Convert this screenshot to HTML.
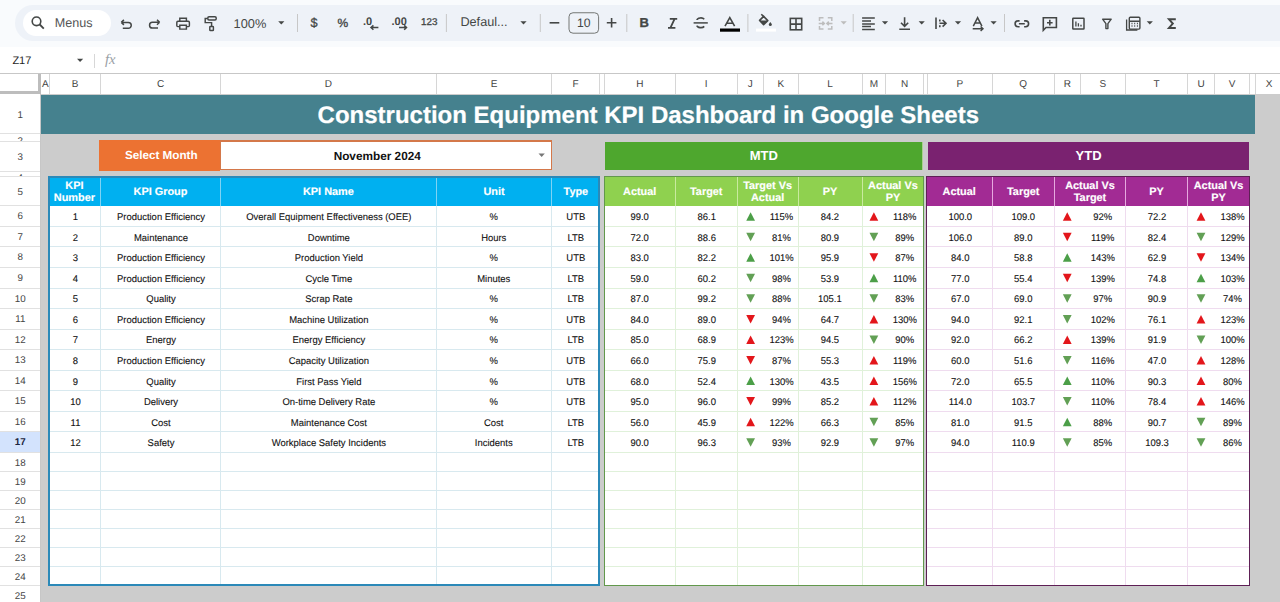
<!DOCTYPE html><html><head><meta charset="utf-8"><style>
html,body{margin:0;padding:0}
body{width:1280px;height:602px;overflow:hidden;position:relative;background:#f9fbfd;font-family:"Liberation Sans",sans-serif;text-rendering:geometricPrecision}
.t{position:absolute;text-align:center;white-space:nowrap;overflow:hidden}
.d{font-size:9.5px;color:#222}
.h{font-size:10.9px;color:#fff;font-weight:bold;-webkit-text-stroke:0.15px #fff}
svg{position:absolute;overflow:visible}
</style></head><body>
<div style="position:absolute;left:15.00px;top:5.00px;width:1305.00px;height:36.00px;background:#eef2f8;border-radius:18px"></div>
<div style="position:absolute;left:22.50px;top:10.00px;width:88.50px;height:26.00px;background:#fff;border-radius:13px"></div>
<svg style="left:0;top:0" width="1280" height="48" viewBox="0 0 1280 48" fill="none" stroke="#444746" stroke-width="1.6" stroke-linecap="butt"><circle cx="36.5" cy="21.3" r="4.3"/><path d="M39.7 24.5 L43.8 28.6" stroke-width="1.8"/><path d="M121.3 22.4 L123.9 19.9 M121.3 22.4 L123.9 24.9 M121.3 22.4 H128.3 a2.95 2.95 0 0 1 0 5.9 H122.8" stroke-width="1.5"/><path d="M159.6 22.3 L157 19.8 M159.6 22.3 L157 24.8 M159.6 22.3 H152.4 a2.85 2.85 0 0 0 0 5.7 H158" stroke-width="1.5"/><path d="M179.8 21.3 V18.3 H186.4 V21.3 M179.6 26.6 H177.8 a1 1 0 0 1 -1 -1 V22.4 a1.2 1.2 0 0 1 1.2 -1.2 H188.2 a1.2 1.2 0 0 1 1.2 1.2 V25.6 a1 1 0 0 1 -1 1 H186.6 M179.8 25.3 H186.4 V29.1 H179.8 Z" stroke-width="1.45"/><rect x="207.8" y="16.7" width="8.4" height="3.3" rx="1.2" stroke-width="1.45"/><path d="M207.6 18.4 H205.2 V22.6 H211.6 V26.4" stroke-width="1.45"/><rect x="209.8" y="26.4" width="3.6" height="4.2" rx="0.7" stroke-width="1.45"/><path d="M297.5 14 V32" stroke="#c7c7c7" stroke-width="1"/><path d="M446.4 14 V32" stroke="#c7c7c7" stroke-width="1"/><path d="M540.3 14 V32" stroke="#c7c7c7" stroke-width="1"/><path d="M626.8 14 V32" stroke="#c7c7c7" stroke-width="1"/><path d="M747.9 14 V32" stroke="#c7c7c7" stroke-width="1"/><path d="M853.2 14 V32" stroke="#c7c7c7" stroke-width="1"/><path d="M1004.5 14 V32" stroke="#c7c7c7" stroke-width="1"/><path d="M549.6 22.8 H559.3"/><path d="M606.8 22.8 H616.4 M611.6 18 V27.6"/><rect x="569" y="12.75" width="29.6" height="20.45" rx="4" stroke="#747775" stroke-width="1"/><path d="M669.8 18.8 H677.2 M668 27.8 H675.4 M674.6 18.8 L670.4 27.8" stroke-width="1.8"/><path d="M693.6 22.9 H707.8" stroke-width="1.5"/><path d="M704.2 19.2 a3.8 2.2 0 0 0 -7.2 0.8 M697 25.6 a3.8 2.2 0 0 0 7.2 0.8" stroke-width="1.7"/><path d="M725 26.2 L729.8 17.6 L734.6 26.2 M726.7 23.3 H732.9" stroke-width="1.6"/><rect x="720" y="28.5" width="20" height="3.2" fill="#000" stroke="none"/><path d="M761.3 14.2 L764 16.9" stroke-width="1.6"/><path d="M759.6 20.4 L763.6 16.4 L767.8 20.6 L763.6 24.6 Z" stroke-width="1.6" stroke-linejoin="round"/><path d="M759.6 20.5 H767.7 L763.6 24.6 Z" fill="#444746" stroke="none"/><path d="M770.3 22 q-1.5 1.8 -1.5 2.6 a1.5 1.5 0 0 0 3 0 q0 -0.8 -1.5 -2.6z" fill="#444746" stroke="none"/><rect x="756" y="28.6" width="20" height="3" fill="#fff" stroke="none"/><rect x="790.3" y="18.4" width="11.4" height="11.4" stroke-width="1.6"/><path d="M796 18.4 V29.8 M790.3 24.1 H801.7" stroke-width="1.6"/><path d="M819.5 21 V17.8 H823.5 M819.5 26 V29 H823.5 M831.8 21 V17.8 H827.8 M831.8 26 V29 H827.8 M818.7 23.4 H824.3 M822.4 21.6 L824.3 23.4 L822.4 25.2 M832.5 23.4 H826.9 M828.8 21.6 L826.9 23.4 L828.8 25.2" stroke="#bdbdbd" stroke-width="1.5"/><path d="M862.1 17.9 H874.8 M862.1 20.9 H871 M862.1 23.9 H874.8 M862.1 26.6 H871 M862.1 29.4 H874.8" stroke-width="1.5"/><path d="M904.6 17.2 V26.2 M901 22.8 L904.6 26.4 L908.2 22.8 M899.3 29.2 H910" stroke-width="1.6"/><path d="M936 17.6 V29 M939.5 23.3 H946 M942.6 20 L946 23.3 L942.6 26.6 M939.8 19.5 V21.5 M939.8 25.2 V27.2" stroke-width="1.6"/><path d="M973.3 26.2 L977.6 17.6 L981.9 26.2 M975 23 H980.2" stroke-width="1.5"/><path d="M972.7 28.8 H983 M980.6 26.6 L983 28.8 L980.6 31" stroke-width="1.4"/><path d="M1019.6 20.9 H1018 a2.9 2.9 0 0 0 0 5.8 H1019.6 M1024.1 20.9 H1025.7 a2.9 2.9 0 0 1 0 5.8 H1024.1 M1018.9 23.8 H1024.8" stroke-width="1.6"/><path d="M1043.3 17.8 H1056.4 V27.5 H1046 L1043.3 30.2 Z M1049.8 19.8 V25.5 M1047 22.7 H1052.6" stroke-width="1.6"/><rect x="1072.8" y="18.2" width="11.2" height="10.8" rx="0.5" stroke-width="1.5"/><path d="M1075.9 21.5 V26.6 M1078.4 23.2 V26.6 M1081 24.8 V26.6" stroke-width="1.3"/><path d="M1102.6 19.2 H1111.2 L1107.9 23.6 V28.6 H1105.9 V23.6 Z" stroke-width="1.4" stroke-linejoin="round"/><path d="M1126.6 19.5 V30 H1137.4" stroke-width="1.3"/><rect x="1129.3" y="17.2" width="10.6" height="11.9" rx="1" stroke-width="1.4"/><path d="M1129.3 21.2 H1139.9 M1131.5 23.5 h1 M1134.2 23.5 h1 M1136.9 23.5 h1 M1131.5 26 h1 M1134.2 26 h1 M1136.9 26 h1" stroke-width="1.5"/><path d="M1175.8 19.3 H1169 L1172.8 23.6 L1169 27.9 H1175.8" stroke-width="2"/><path d="M278.2 21.2 H284.4 L281.3 24.4 Z" fill="#444746" stroke="none"/><path d="M520.4 21.2 H526.6 L523.5 24.4 Z" fill="#444746" stroke="none"/><path d="M881.9 21.2 H888.1 L885.0 24.4 Z" fill="#444746" stroke="none"/><path d="M918.6 21.2 H924.8000000000001 L921.7 24.4 Z" fill="#444746" stroke="none"/><path d="M954.9 21.2 H961.1 L958.0 24.4 Z" fill="#444746" stroke="none"/><path d="M990.5 21.2 H996.7 L993.6 24.4 Z" fill="#444746" stroke="none"/><path d="M1146.7 21.2 H1152.9 L1149.8 24.4 Z" fill="#444746" stroke="none"/><path d="M840.6 21.2 H846.8 L843.7 24.4 Z" fill="#bdbdbd" stroke="none"/></svg>
<div style="position:absolute;left:54.8px;top:15.9px;white-space:nowrap;font-size:12.6px;color:#555">Menus</div>
<div style="position:absolute;left:233.6px;top:15.5px;white-space:nowrap;font-size:12.8px;color:#444746">100%</div>
<div style="position:absolute;left:310.6px;top:15.2px;white-space:nowrap;font-size:12.8px;color:#444746;-webkit-text-stroke:0.25px #444746">$</div>
<div style="position:absolute;left:337.4px;top:15.6px;white-space:nowrap;font-size:12px;color:#444746;-webkit-text-stroke:0.35px #444746">%</div>
<div style="position:absolute;left:363px;top:15.6px;white-space:nowrap;font-size:11px;color:#444746;font-weight:bold">.0</div>
<div style="position:absolute;left:391.5px;top:15.6px;white-space:nowrap;font-size:11px;color:#444746;font-weight:bold">.00</div>
<div style="position:absolute;left:421px;top:17.4px;white-space:nowrap;font-size:9.8px;color:#444746;-webkit-text-stroke:0.3px #444746">123</div>
<div style="position:absolute;left:460.4px;top:15.2px;white-space:nowrap;font-size:12.7px;color:#444746">Defaul...</div>
<div style="position:absolute;left:577px;top:15.8px;white-space:nowrap;font-size:12.2px;color:#444746">10</div>
<div style="position:absolute;left:639.6px;top:15.1px;white-space:nowrap;font-size:13px;color:#444746;font-weight:bold;-webkit-text-stroke:0.35px #444746">B</div>
<svg style="left:0;top:0" width="1280" height="48" fill="none" stroke="#444746" stroke-width="1.5"><path d="M371 27.6 H378.4 M373.4 25.4 L371 27.6 L373.4 29.8"/><path d="M399 27.6 H406.5 M404.2 25.4 L406.5 27.6 L404.2 29.8"/></svg>
<div style="position:absolute;left:0.00px;top:47.20px;width:1280.00px;height:25.80px;background:#fff"></div>
<div style="position:absolute;left:0.00px;top:73.00px;width:1280.00px;height:1.00px;background:#c7c7c7"></div>
<div style="position:absolute;left:12.4px;top:54.5px;white-space:nowrap;font-size:11px;color:#1f1f1f">Z17</div>
<svg style="left:0;top:0" width="200" height="80"><path d="M77 58.8 H83.2 L80.1 62 Z" fill="#444746"/><path d="M94.5 54 V68" stroke="#d7d7d7" stroke-width="1"/></svg>
<div style="position:absolute;left:105px;top:52px;white-space:nowrap;font-size:14.5px;color:#9aa0a6;font-family:'Liberation Serif',serif"><i>fx</i></div>
<div style="position:absolute;left:0.00px;top:74.00px;width:1280.00px;height:20.00px;background:#fff"></div>
<div class="t" style="left:41.00px;top:75.20px;width:8.50px;height:18.80px;line-height:18.80px;font-size:10px;color:#444;line-height:20px">A</div>
<div style="position:absolute;left:49.00px;top:74.00px;width:1.00px;height:20.00px;background:#d6d6d6"></div>
<div class="t" style="left:49.50px;top:75.20px;width:51.00px;height:18.80px;line-height:18.80px;font-size:10px;color:#444;line-height:20px">B</div>
<div style="position:absolute;left:100.00px;top:74.00px;width:1.00px;height:20.00px;background:#d6d6d6"></div>
<div class="t" style="left:100.50px;top:75.20px;width:120.00px;height:18.80px;line-height:18.80px;font-size:10px;color:#444;line-height:20px">C</div>
<div style="position:absolute;left:220.00px;top:74.00px;width:1.00px;height:20.00px;background:#d6d6d6"></div>
<div class="t" style="left:220.50px;top:75.20px;width:215.75px;height:18.80px;line-height:18.80px;font-size:10px;color:#444;line-height:20px">D</div>
<div style="position:absolute;left:435.75px;top:74.00px;width:1.00px;height:20.00px;background:#d6d6d6"></div>
<div class="t" style="left:436.25px;top:75.20px;width:115.50px;height:18.80px;line-height:18.80px;font-size:10px;color:#444;line-height:20px">E</div>
<div style="position:absolute;left:551.25px;top:74.00px;width:1.00px;height:20.00px;background:#d6d6d6"></div>
<div class="t" style="left:551.75px;top:75.20px;width:47.50px;height:18.80px;line-height:18.80px;font-size:10px;color:#444;line-height:20px">F</div>
<div style="position:absolute;left:598.75px;top:74.00px;width:1.00px;height:20.00px;background:#d6d6d6"></div>
<div style="position:absolute;left:603.75px;top:74.00px;width:1.00px;height:20.00px;background:#d6d6d6"></div>
<div class="t" style="left:604.25px;top:75.20px;width:71.25px;height:18.80px;line-height:18.80px;font-size:10px;color:#444;line-height:20px">H</div>
<div style="position:absolute;left:675.00px;top:74.00px;width:1.00px;height:20.00px;background:#d6d6d6"></div>
<div class="t" style="left:675.50px;top:75.20px;width:61.50px;height:18.80px;line-height:18.80px;font-size:10px;color:#444;line-height:20px">I</div>
<div style="position:absolute;left:736.50px;top:74.00px;width:1.00px;height:20.00px;background:#d6d6d6"></div>
<div class="t" style="left:737.00px;top:75.20px;width:26.25px;height:18.80px;line-height:18.80px;font-size:10px;color:#444;line-height:20px">J</div>
<div style="position:absolute;left:762.75px;top:74.00px;width:1.00px;height:20.00px;background:#d6d6d6"></div>
<div class="t" style="left:763.25px;top:75.20px;width:35.00px;height:18.80px;line-height:18.80px;font-size:10px;color:#444;line-height:20px">K</div>
<div style="position:absolute;left:797.75px;top:74.00px;width:1.00px;height:20.00px;background:#d6d6d6"></div>
<div class="t" style="left:798.25px;top:75.20px;width:63.75px;height:18.80px;line-height:18.80px;font-size:10px;color:#444;line-height:20px">L</div>
<div style="position:absolute;left:861.50px;top:74.00px;width:1.00px;height:20.00px;background:#d6d6d6"></div>
<div class="t" style="left:862.00px;top:75.20px;width:23.75px;height:18.80px;line-height:18.80px;font-size:10px;color:#444;line-height:20px">M</div>
<div style="position:absolute;left:885.25px;top:74.00px;width:1.00px;height:20.00px;background:#d6d6d6"></div>
<div class="t" style="left:885.75px;top:75.20px;width:37.50px;height:18.80px;line-height:18.80px;font-size:10px;color:#444;line-height:20px">N</div>
<div style="position:absolute;left:922.75px;top:74.00px;width:1.00px;height:20.00px;background:#d6d6d6"></div>
<div style="position:absolute;left:927.00px;top:74.00px;width:1.00px;height:20.00px;background:#d6d6d6"></div>
<div class="t" style="left:927.50px;top:75.20px;width:64.50px;height:18.80px;line-height:18.80px;font-size:10px;color:#444;line-height:20px">P</div>
<div style="position:absolute;left:991.50px;top:74.00px;width:1.00px;height:20.00px;background:#d6d6d6"></div>
<div class="t" style="left:992.00px;top:75.20px;width:62.50px;height:18.80px;line-height:18.80px;font-size:10px;color:#444;line-height:20px">Q</div>
<div style="position:absolute;left:1054.00px;top:74.00px;width:1.00px;height:20.00px;background:#d6d6d6"></div>
<div class="t" style="left:1054.50px;top:75.20px;width:25.50px;height:18.80px;line-height:18.80px;font-size:10px;color:#444;line-height:20px">R</div>
<div style="position:absolute;left:1079.50px;top:74.00px;width:1.00px;height:20.00px;background:#d6d6d6"></div>
<div class="t" style="left:1080.00px;top:75.20px;width:45.50px;height:18.80px;line-height:18.80px;font-size:10px;color:#444;line-height:20px">S</div>
<div style="position:absolute;left:1125.00px;top:74.00px;width:1.00px;height:20.00px;background:#d6d6d6"></div>
<div class="t" style="left:1125.50px;top:75.20px;width:62.00px;height:18.80px;line-height:18.80px;font-size:10px;color:#444;line-height:20px">T</div>
<div style="position:absolute;left:1187.00px;top:74.00px;width:1.00px;height:20.00px;background:#d6d6d6"></div>
<div class="t" style="left:1187.50px;top:75.20px;width:27.00px;height:18.80px;line-height:18.80px;font-size:10px;color:#444;line-height:20px">U</div>
<div style="position:absolute;left:1214.00px;top:74.00px;width:1.00px;height:20.00px;background:#d6d6d6"></div>
<div class="t" style="left:1214.50px;top:75.20px;width:35.00px;height:18.80px;line-height:18.80px;font-size:10px;color:#444;line-height:20px">V</div>
<div style="position:absolute;left:1249.00px;top:74.00px;width:1.00px;height:20.00px;background:#d6d6d6"></div>
<div style="position:absolute;left:1254.50px;top:74.00px;width:1.00px;height:20.00px;background:#d6d6d6"></div>
<div class="t" style="left:1255.00px;top:75.20px;width:28.00px;height:18.80px;line-height:18.80px;font-size:10px;color:#444;line-height:20px">X</div>
<div style="position:absolute;left:1282.50px;top:74.00px;width:1.00px;height:20.00px;background:#d6d6d6"></div>
<div style="position:absolute;left:1399.50px;top:74.00px;width:1.00px;height:20.00px;background:#d6d6d6"></div>
<div style="position:absolute;left:0.00px;top:74.00px;width:40.60px;height:20.00px;background:#fff"></div>
<div style="position:absolute;left:37.50px;top:74.00px;width:3.10px;height:20.00px;background:#bdbdbd"></div>
<div style="position:absolute;left:0.00px;top:91.00px;width:40.60px;height:3.00px;background:#bdbdbd"></div>
<div style="position:absolute;left:0.00px;top:94.00px;width:40.60px;height:508.00px;background:#fff"></div>
<div class="t" style="left:0.00px;top:95.50px;width:40.60px;height:39.50px;line-height:39.50px;font-size:9.8px;color:#444;">1</div>
<div style="position:absolute;left:0.00px;top:133.00px;width:40.60px;height:1.00px;background:#e1e1e1"></div>
<div class="t" style="left:0.00px;top:133.50px;width:40.60px;height:7.50px;line-height:7.50px;font-size:9.8px;color:#444;line-height:16px;height:7.5px">2</div>
<div style="position:absolute;left:0.00px;top:140.50px;width:40.60px;height:1.00px;background:#e1e1e1"></div>
<div class="t" style="left:0.00px;top:142.50px;width:40.60px;height:30.00px;line-height:30.00px;font-size:9.8px;color:#444;">3</div>
<div style="position:absolute;left:0.00px;top:170.50px;width:40.60px;height:1.00px;background:#e1e1e1"></div>
<div class="t" style="left:0.00px;top:171.00px;width:40.60px;height:5.00px;line-height:5.00px;font-size:9.8px;color:#444;line-height:16px;height:5px">4</div>
<div style="position:absolute;left:0.00px;top:175.50px;width:40.60px;height:1.00px;background:#e1e1e1"></div>
<div class="t" style="left:0.00px;top:177.50px;width:40.60px;height:29.80px;line-height:29.80px;font-size:9.8px;color:#444;">5</div>
<div style="position:absolute;left:0.00px;top:205.30px;width:40.60px;height:1.00px;background:#e1e1e1"></div>
<div class="t" style="left:0.00px;top:207.30px;width:40.60px;height:20.55px;line-height:20.55px;font-size:9.8px;color:#444;">6</div>
<div style="position:absolute;left:0.00px;top:225.85px;width:40.60px;height:1.00px;background:#e1e1e1"></div>
<div class="t" style="left:0.00px;top:227.85px;width:40.60px;height:20.55px;line-height:20.55px;font-size:9.8px;color:#444;">7</div>
<div style="position:absolute;left:0.00px;top:246.40px;width:40.60px;height:1.00px;background:#e1e1e1"></div>
<div class="t" style="left:0.00px;top:248.40px;width:40.60px;height:20.55px;line-height:20.55px;font-size:9.8px;color:#444;">8</div>
<div style="position:absolute;left:0.00px;top:266.95px;width:40.60px;height:1.00px;background:#e1e1e1"></div>
<div class="t" style="left:0.00px;top:268.95px;width:40.60px;height:20.55px;line-height:20.55px;font-size:9.8px;color:#444;">9</div>
<div style="position:absolute;left:0.00px;top:287.50px;width:40.60px;height:1.00px;background:#e1e1e1"></div>
<div class="t" style="left:0.00px;top:289.50px;width:40.60px;height:20.55px;line-height:20.55px;font-size:9.8px;color:#444;">10</div>
<div style="position:absolute;left:0.00px;top:308.05px;width:40.60px;height:1.00px;background:#e1e1e1"></div>
<div class="t" style="left:0.00px;top:310.05px;width:40.60px;height:20.55px;line-height:20.55px;font-size:9.8px;color:#444;">11</div>
<div style="position:absolute;left:0.00px;top:328.60px;width:40.60px;height:1.00px;background:#e1e1e1"></div>
<div class="t" style="left:0.00px;top:330.60px;width:40.60px;height:20.55px;line-height:20.55px;font-size:9.8px;color:#444;">12</div>
<div style="position:absolute;left:0.00px;top:349.15px;width:40.60px;height:1.00px;background:#e1e1e1"></div>
<div class="t" style="left:0.00px;top:351.15px;width:40.60px;height:20.55px;line-height:20.55px;font-size:9.8px;color:#444;">13</div>
<div style="position:absolute;left:0.00px;top:369.70px;width:40.60px;height:1.00px;background:#e1e1e1"></div>
<div class="t" style="left:0.00px;top:371.70px;width:40.60px;height:20.55px;line-height:20.55px;font-size:9.8px;color:#444;">14</div>
<div style="position:absolute;left:0.00px;top:390.25px;width:40.60px;height:1.00px;background:#e1e1e1"></div>
<div class="t" style="left:0.00px;top:392.25px;width:40.60px;height:20.55px;line-height:20.55px;font-size:9.8px;color:#444;">15</div>
<div style="position:absolute;left:0.00px;top:410.80px;width:40.60px;height:1.00px;background:#e1e1e1"></div>
<div class="t" style="left:0.00px;top:412.80px;width:40.60px;height:20.55px;line-height:20.55px;font-size:9.8px;color:#444;">16</div>
<div style="position:absolute;left:0.00px;top:431.35px;width:40.60px;height:1.00px;background:#e1e1e1"></div>
<div style="position:absolute;left:0.00px;top:431.85px;width:40.60px;height:20.55px;background:#d3e3fd"></div>
<div class="t" style="left:0.00px;top:433.35px;width:40.60px;height:20.55px;line-height:20.55px;font-size:9.8px;color:#1b2540;font-weight:bold;">17</div>
<div style="position:absolute;left:0.00px;top:451.90px;width:40.60px;height:1.00px;background:#e1e1e1"></div>
<div class="t" style="left:0.00px;top:453.90px;width:40.60px;height:19.03px;line-height:19.03px;font-size:9.8px;color:#444;">18</div>
<div style="position:absolute;left:0.00px;top:470.93px;width:40.60px;height:1.00px;background:#e1e1e1"></div>
<div class="t" style="left:0.00px;top:472.93px;width:40.60px;height:19.03px;line-height:19.03px;font-size:9.8px;color:#444;">19</div>
<div style="position:absolute;left:0.00px;top:489.96px;width:40.60px;height:1.00px;background:#e1e1e1"></div>
<div class="t" style="left:0.00px;top:491.96px;width:40.60px;height:19.03px;line-height:19.03px;font-size:9.8px;color:#444;">20</div>
<div style="position:absolute;left:0.00px;top:508.99px;width:40.60px;height:1.00px;background:#e1e1e1"></div>
<div class="t" style="left:0.00px;top:510.99px;width:40.60px;height:19.03px;line-height:19.03px;font-size:9.8px;color:#444;">21</div>
<div style="position:absolute;left:0.00px;top:528.02px;width:40.60px;height:1.00px;background:#e1e1e1"></div>
<div class="t" style="left:0.00px;top:530.02px;width:40.60px;height:19.03px;line-height:19.03px;font-size:9.8px;color:#444;">22</div>
<div style="position:absolute;left:0.00px;top:547.05px;width:40.60px;height:1.00px;background:#e1e1e1"></div>
<div class="t" style="left:0.00px;top:549.05px;width:40.60px;height:19.03px;line-height:19.03px;font-size:9.8px;color:#444;">23</div>
<div style="position:absolute;left:0.00px;top:566.08px;width:40.60px;height:1.00px;background:#e1e1e1"></div>
<div class="t" style="left:0.00px;top:568.08px;width:40.60px;height:19.03px;line-height:19.03px;font-size:9.8px;color:#444;">24</div>
<div style="position:absolute;left:0.00px;top:585.11px;width:40.60px;height:1.00px;background:#e1e1e1"></div>
<div class="t" style="left:0.00px;top:587.11px;width:40.60px;height:19.03px;line-height:19.03px;font-size:9.8px;color:#444;">25</div>
<div style="position:absolute;left:0.00px;top:604.14px;width:40.60px;height:1.00px;background:#e1e1e1"></div>
<div style="position:absolute;left:40.10px;top:94.00px;width:0.90px;height:508.00px;background:#c7c7c7"></div>
<div style="position:absolute;left:41.00px;top:94.00px;width:1239.00px;height:508.00px;background:#cccccc"></div>
<div style="position:absolute;left:41.00px;top:94.80px;width:1214.00px;height:38.80px;background:#45818e"></div>
<div class="t" style="left:41.30px;top:96.20px;width:1214.00px;height:38.80px;line-height:38.80px;font-size:24px;font-weight:bold;color:#fff;line-height:40px;-webkit-text-stroke:0.2px #fff">Construction Equipment KPI Dashboard in Google Sheets</div>
<div style="position:absolute;left:99.00px;top:140.20px;width:121.30px;height:30.80px;background:#ec7232"></div>
<div class="t" style="left:100.60px;top:140.20px;width:121.30px;height:30.80px;line-height:30.80px;font-size:11.7px;font-weight:bold;color:#fff;line-height:31px">Select Month</div>
<div style="position:absolute;left:220.30px;top:140.00px;width:331.70px;height:30.40px;background:#fff;border:1.7px solid #d4784a;border-top-width:2px;box-sizing:border-box"></div>
<div class="t" style="left:219.50px;top:140.60px;width:315.50px;height:30.00px;line-height:30.00px;font-size:11.8px;font-weight:bold;color:#111;line-height:30px">November 2024</div>
<svg style="left:0;top:0" width="600" height="200"><path d="M538.5 153.6 H544.8 L541.65 157 Z" fill="#777"/></svg>
<div style="position:absolute;left:604.60px;top:141.60px;width:318.40px;height:28.10px;background:#4ea72e;border-right:1px solid #a9d18e;box-sizing:border-box"></div>
<div class="t" style="left:604.60px;top:141.60px;width:318.40px;height:28.10px;line-height:28.10px;font-size:13px;font-weight:bold;color:#fff;line-height:28px">MTD</div>
<div style="position:absolute;left:927.90px;top:141.60px;width:321.30px;height:28.10px;background:#7a2270"></div>
<div class="t" style="left:927.90px;top:141.60px;width:321.30px;height:28.10px;line-height:28.10px;font-size:13px;font-weight:bold;color:#fff;line-height:28px">YTD</div>
<div style="position:absolute;left:48.30px;top:176.00px;width:551.70px;height:409.60px;background:#fff"></div>
<div style="position:absolute;left:48.30px;top:176.00px;width:551.70px;height:29.80px;background:#00b0f0"></div>
<div style="position:absolute;left:48.30px;top:225.85px;width:551.70px;height:1.00px;background:#d8e9ef"></div>
<div style="position:absolute;left:48.30px;top:246.40px;width:551.70px;height:1.00px;background:#d8e9ef"></div>
<div style="position:absolute;left:48.30px;top:266.95px;width:551.70px;height:1.00px;background:#d8e9ef"></div>
<div style="position:absolute;left:48.30px;top:287.50px;width:551.70px;height:1.00px;background:#d8e9ef"></div>
<div style="position:absolute;left:48.30px;top:308.05px;width:551.70px;height:1.00px;background:#d8e9ef"></div>
<div style="position:absolute;left:48.30px;top:328.60px;width:551.70px;height:1.00px;background:#d8e9ef"></div>
<div style="position:absolute;left:48.30px;top:349.15px;width:551.70px;height:1.00px;background:#d8e9ef"></div>
<div style="position:absolute;left:48.30px;top:369.70px;width:551.70px;height:1.00px;background:#d8e9ef"></div>
<div style="position:absolute;left:48.30px;top:390.25px;width:551.70px;height:1.00px;background:#d8e9ef"></div>
<div style="position:absolute;left:48.30px;top:410.80px;width:551.70px;height:1.00px;background:#d8e9ef"></div>
<div style="position:absolute;left:48.30px;top:431.35px;width:551.70px;height:1.00px;background:#d8e9ef"></div>
<div style="position:absolute;left:48.30px;top:451.90px;width:551.70px;height:1.00px;background:#d8e9ef"></div>
<div style="position:absolute;left:48.30px;top:470.93px;width:551.70px;height:1.00px;background:#d8e9ef"></div>
<div style="position:absolute;left:48.30px;top:489.96px;width:551.70px;height:1.00px;background:#d8e9ef"></div>
<div style="position:absolute;left:48.30px;top:508.99px;width:551.70px;height:1.00px;background:#d8e9ef"></div>
<div style="position:absolute;left:48.30px;top:528.02px;width:551.70px;height:1.00px;background:#d8e9ef"></div>
<div style="position:absolute;left:48.30px;top:547.05px;width:551.70px;height:1.00px;background:#d8e9ef"></div>
<div style="position:absolute;left:48.30px;top:566.08px;width:551.70px;height:1.00px;background:#d8e9ef"></div>
<div style="position:absolute;left:48.30px;top:585.11px;width:551.70px;height:1.00px;background:#d8e9ef"></div>
<div style="position:absolute;left:100.00px;top:205.80px;width:1.00px;height:379.80px;background:#d8e9ef"></div>
<div style="position:absolute;left:100.00px;top:176.00px;width:1.00px;height:29.80px;background:#7fd3f4"></div>
<div style="position:absolute;left:220.00px;top:205.80px;width:1.00px;height:379.80px;background:#d8e9ef"></div>
<div style="position:absolute;left:220.00px;top:176.00px;width:1.00px;height:29.80px;background:#7fd3f4"></div>
<div style="position:absolute;left:435.75px;top:205.80px;width:1.00px;height:379.80px;background:#d8e9ef"></div>
<div style="position:absolute;left:435.75px;top:176.00px;width:1.00px;height:29.80px;background:#7fd3f4"></div>
<div style="position:absolute;left:551.25px;top:205.80px;width:1.00px;height:379.80px;background:#d8e9ef"></div>
<div style="position:absolute;left:551.25px;top:176.00px;width:1.00px;height:29.80px;background:#7fd3f4"></div>
<div class="t h" style="left:48.30px;top:176px;width:52.20px;height:29.80px;line-height:11.9px;padding-top:4.9px;box-sizing:border-box">KPI<br>Number</div>
<div class="t" style="left:100.50px;top:178.00px;width:120.00px;height:29.80px;line-height:29.80px;font-size:10.9px;color:#fff;font-weight:bold;-webkit-text-stroke:0.15px #fff">KPI Group</div>
<div class="t" style="left:220.50px;top:178.00px;width:215.75px;height:29.80px;line-height:29.80px;font-size:10.9px;color:#fff;font-weight:bold;-webkit-text-stroke:0.15px #fff">KPI Name</div>
<div class="t" style="left:436.25px;top:178.00px;width:115.50px;height:29.80px;line-height:29.80px;font-size:10.9px;color:#fff;font-weight:bold;-webkit-text-stroke:0.15px #fff">Unit</div>
<div class="t" style="left:551.75px;top:178.00px;width:48.25px;height:29.80px;line-height:29.80px;font-size:10.9px;color:#fff;font-weight:bold;-webkit-text-stroke:0.15px #fff">Type</div>
<div style="position:absolute;left:48.30px;top:176.00px;width:551.70px;height:409.60px;border:2px solid #2b89b8;box-sizing:border-box"></div>
<div class="t" style="left:49.50px;top:208.10px;width:51.00px;height:20.55px;line-height:20.55px;font-size:9.7px;color:#111;-webkit-text-stroke:0.1px #111;transform:scaleX(0.975)">1</div>
<div class="t" style="left:100.50px;top:208.10px;width:120.00px;height:20.55px;line-height:20.55px;font-size:9.7px;color:#111;-webkit-text-stroke:0.1px #111;transform:scaleX(0.975)">Production Efficiency</div>
<div class="t" style="left:220.50px;top:208.10px;width:215.75px;height:20.55px;line-height:20.55px;font-size:9.7px;color:#111;-webkit-text-stroke:0.1px #111;transform:scaleX(0.975)">Overall Equipment Effectiveness (OEE)</div>
<div class="t" style="left:436.25px;top:208.10px;width:115.50px;height:20.55px;line-height:20.55px;font-size:9.7px;color:#111;-webkit-text-stroke:0.1px #111;transform:scaleX(0.975)">%</div>
<div class="t" style="left:551.75px;top:208.10px;width:47.50px;height:20.55px;line-height:20.55px;font-size:9.7px;color:#111;-webkit-text-stroke:0.1px #111;transform:scaleX(0.975)">UTB</div>
<div class="t" style="left:49.50px;top:228.65px;width:51.00px;height:20.55px;line-height:20.55px;font-size:9.7px;color:#111;-webkit-text-stroke:0.1px #111;transform:scaleX(0.975)">2</div>
<div class="t" style="left:100.50px;top:228.65px;width:120.00px;height:20.55px;line-height:20.55px;font-size:9.7px;color:#111;-webkit-text-stroke:0.1px #111;transform:scaleX(0.975)">Maintenance</div>
<div class="t" style="left:220.50px;top:228.65px;width:215.75px;height:20.55px;line-height:20.55px;font-size:9.7px;color:#111;-webkit-text-stroke:0.1px #111;transform:scaleX(0.975)">Downtime</div>
<div class="t" style="left:436.25px;top:228.65px;width:115.50px;height:20.55px;line-height:20.55px;font-size:9.7px;color:#111;-webkit-text-stroke:0.1px #111;transform:scaleX(0.975)">Hours</div>
<div class="t" style="left:551.75px;top:228.65px;width:47.50px;height:20.55px;line-height:20.55px;font-size:9.7px;color:#111;-webkit-text-stroke:0.1px #111;transform:scaleX(0.975)">LTB</div>
<div class="t" style="left:49.50px;top:249.20px;width:51.00px;height:20.55px;line-height:20.55px;font-size:9.7px;color:#111;-webkit-text-stroke:0.1px #111;transform:scaleX(0.975)">3</div>
<div class="t" style="left:100.50px;top:249.20px;width:120.00px;height:20.55px;line-height:20.55px;font-size:9.7px;color:#111;-webkit-text-stroke:0.1px #111;transform:scaleX(0.975)">Production Efficiency</div>
<div class="t" style="left:220.50px;top:249.20px;width:215.75px;height:20.55px;line-height:20.55px;font-size:9.7px;color:#111;-webkit-text-stroke:0.1px #111;transform:scaleX(0.975)">Production Yield</div>
<div class="t" style="left:436.25px;top:249.20px;width:115.50px;height:20.55px;line-height:20.55px;font-size:9.7px;color:#111;-webkit-text-stroke:0.1px #111;transform:scaleX(0.975)">%</div>
<div class="t" style="left:551.75px;top:249.20px;width:47.50px;height:20.55px;line-height:20.55px;font-size:9.7px;color:#111;-webkit-text-stroke:0.1px #111;transform:scaleX(0.975)">UTB</div>
<div class="t" style="left:49.50px;top:269.75px;width:51.00px;height:20.55px;line-height:20.55px;font-size:9.7px;color:#111;-webkit-text-stroke:0.1px #111;transform:scaleX(0.975)">4</div>
<div class="t" style="left:100.50px;top:269.75px;width:120.00px;height:20.55px;line-height:20.55px;font-size:9.7px;color:#111;-webkit-text-stroke:0.1px #111;transform:scaleX(0.975)">Production Efficiency</div>
<div class="t" style="left:220.50px;top:269.75px;width:215.75px;height:20.55px;line-height:20.55px;font-size:9.7px;color:#111;-webkit-text-stroke:0.1px #111;transform:scaleX(0.975)">Cycle Time</div>
<div class="t" style="left:436.25px;top:269.75px;width:115.50px;height:20.55px;line-height:20.55px;font-size:9.7px;color:#111;-webkit-text-stroke:0.1px #111;transform:scaleX(0.975)">Minutes</div>
<div class="t" style="left:551.75px;top:269.75px;width:47.50px;height:20.55px;line-height:20.55px;font-size:9.7px;color:#111;-webkit-text-stroke:0.1px #111;transform:scaleX(0.975)">LTB</div>
<div class="t" style="left:49.50px;top:290.30px;width:51.00px;height:20.55px;line-height:20.55px;font-size:9.7px;color:#111;-webkit-text-stroke:0.1px #111;transform:scaleX(0.975)">5</div>
<div class="t" style="left:100.50px;top:290.30px;width:120.00px;height:20.55px;line-height:20.55px;font-size:9.7px;color:#111;-webkit-text-stroke:0.1px #111;transform:scaleX(0.975)">Quality</div>
<div class="t" style="left:220.50px;top:290.30px;width:215.75px;height:20.55px;line-height:20.55px;font-size:9.7px;color:#111;-webkit-text-stroke:0.1px #111;transform:scaleX(0.975)">Scrap Rate</div>
<div class="t" style="left:436.25px;top:290.30px;width:115.50px;height:20.55px;line-height:20.55px;font-size:9.7px;color:#111;-webkit-text-stroke:0.1px #111;transform:scaleX(0.975)">%</div>
<div class="t" style="left:551.75px;top:290.30px;width:47.50px;height:20.55px;line-height:20.55px;font-size:9.7px;color:#111;-webkit-text-stroke:0.1px #111;transform:scaleX(0.975)">LTB</div>
<div class="t" style="left:49.50px;top:310.85px;width:51.00px;height:20.55px;line-height:20.55px;font-size:9.7px;color:#111;-webkit-text-stroke:0.1px #111;transform:scaleX(0.975)">6</div>
<div class="t" style="left:100.50px;top:310.85px;width:120.00px;height:20.55px;line-height:20.55px;font-size:9.7px;color:#111;-webkit-text-stroke:0.1px #111;transform:scaleX(0.975)">Production Efficiency</div>
<div class="t" style="left:220.50px;top:310.85px;width:215.75px;height:20.55px;line-height:20.55px;font-size:9.7px;color:#111;-webkit-text-stroke:0.1px #111;transform:scaleX(0.975)">Machine Utilization</div>
<div class="t" style="left:436.25px;top:310.85px;width:115.50px;height:20.55px;line-height:20.55px;font-size:9.7px;color:#111;-webkit-text-stroke:0.1px #111;transform:scaleX(0.975)">%</div>
<div class="t" style="left:551.75px;top:310.85px;width:47.50px;height:20.55px;line-height:20.55px;font-size:9.7px;color:#111;-webkit-text-stroke:0.1px #111;transform:scaleX(0.975)">UTB</div>
<div class="t" style="left:49.50px;top:331.40px;width:51.00px;height:20.55px;line-height:20.55px;font-size:9.7px;color:#111;-webkit-text-stroke:0.1px #111;transform:scaleX(0.975)">7</div>
<div class="t" style="left:100.50px;top:331.40px;width:120.00px;height:20.55px;line-height:20.55px;font-size:9.7px;color:#111;-webkit-text-stroke:0.1px #111;transform:scaleX(0.975)">Energy</div>
<div class="t" style="left:220.50px;top:331.40px;width:215.75px;height:20.55px;line-height:20.55px;font-size:9.7px;color:#111;-webkit-text-stroke:0.1px #111;transform:scaleX(0.975)">Energy Efficiency</div>
<div class="t" style="left:436.25px;top:331.40px;width:115.50px;height:20.55px;line-height:20.55px;font-size:9.7px;color:#111;-webkit-text-stroke:0.1px #111;transform:scaleX(0.975)">%</div>
<div class="t" style="left:551.75px;top:331.40px;width:47.50px;height:20.55px;line-height:20.55px;font-size:9.7px;color:#111;-webkit-text-stroke:0.1px #111;transform:scaleX(0.975)">LTB</div>
<div class="t" style="left:49.50px;top:351.95px;width:51.00px;height:20.55px;line-height:20.55px;font-size:9.7px;color:#111;-webkit-text-stroke:0.1px #111;transform:scaleX(0.975)">8</div>
<div class="t" style="left:100.50px;top:351.95px;width:120.00px;height:20.55px;line-height:20.55px;font-size:9.7px;color:#111;-webkit-text-stroke:0.1px #111;transform:scaleX(0.975)">Production Efficiency</div>
<div class="t" style="left:220.50px;top:351.95px;width:215.75px;height:20.55px;line-height:20.55px;font-size:9.7px;color:#111;-webkit-text-stroke:0.1px #111;transform:scaleX(0.975)">Capacity Utilization</div>
<div class="t" style="left:436.25px;top:351.95px;width:115.50px;height:20.55px;line-height:20.55px;font-size:9.7px;color:#111;-webkit-text-stroke:0.1px #111;transform:scaleX(0.975)">%</div>
<div class="t" style="left:551.75px;top:351.95px;width:47.50px;height:20.55px;line-height:20.55px;font-size:9.7px;color:#111;-webkit-text-stroke:0.1px #111;transform:scaleX(0.975)">UTB</div>
<div class="t" style="left:49.50px;top:372.50px;width:51.00px;height:20.55px;line-height:20.55px;font-size:9.7px;color:#111;-webkit-text-stroke:0.1px #111;transform:scaleX(0.975)">9</div>
<div class="t" style="left:100.50px;top:372.50px;width:120.00px;height:20.55px;line-height:20.55px;font-size:9.7px;color:#111;-webkit-text-stroke:0.1px #111;transform:scaleX(0.975)">Quality</div>
<div class="t" style="left:220.50px;top:372.50px;width:215.75px;height:20.55px;line-height:20.55px;font-size:9.7px;color:#111;-webkit-text-stroke:0.1px #111;transform:scaleX(0.975)">First Pass Yield</div>
<div class="t" style="left:436.25px;top:372.50px;width:115.50px;height:20.55px;line-height:20.55px;font-size:9.7px;color:#111;-webkit-text-stroke:0.1px #111;transform:scaleX(0.975)">%</div>
<div class="t" style="left:551.75px;top:372.50px;width:47.50px;height:20.55px;line-height:20.55px;font-size:9.7px;color:#111;-webkit-text-stroke:0.1px #111;transform:scaleX(0.975)">UTB</div>
<div class="t" style="left:49.50px;top:393.05px;width:51.00px;height:20.55px;line-height:20.55px;font-size:9.7px;color:#111;-webkit-text-stroke:0.1px #111;transform:scaleX(0.975)">10</div>
<div class="t" style="left:100.50px;top:393.05px;width:120.00px;height:20.55px;line-height:20.55px;font-size:9.7px;color:#111;-webkit-text-stroke:0.1px #111;transform:scaleX(0.975)">Delivery</div>
<div class="t" style="left:220.50px;top:393.05px;width:215.75px;height:20.55px;line-height:20.55px;font-size:9.7px;color:#111;-webkit-text-stroke:0.1px #111;transform:scaleX(0.975)">On-time Delivery Rate</div>
<div class="t" style="left:436.25px;top:393.05px;width:115.50px;height:20.55px;line-height:20.55px;font-size:9.7px;color:#111;-webkit-text-stroke:0.1px #111;transform:scaleX(0.975)">%</div>
<div class="t" style="left:551.75px;top:393.05px;width:47.50px;height:20.55px;line-height:20.55px;font-size:9.7px;color:#111;-webkit-text-stroke:0.1px #111;transform:scaleX(0.975)">UTB</div>
<div class="t" style="left:49.50px;top:413.60px;width:51.00px;height:20.55px;line-height:20.55px;font-size:9.7px;color:#111;-webkit-text-stroke:0.1px #111;transform:scaleX(0.975)">11</div>
<div class="t" style="left:100.50px;top:413.60px;width:120.00px;height:20.55px;line-height:20.55px;font-size:9.7px;color:#111;-webkit-text-stroke:0.1px #111;transform:scaleX(0.975)">Cost</div>
<div class="t" style="left:220.50px;top:413.60px;width:215.75px;height:20.55px;line-height:20.55px;font-size:9.7px;color:#111;-webkit-text-stroke:0.1px #111;transform:scaleX(0.975)">Maintenance Cost</div>
<div class="t" style="left:436.25px;top:413.60px;width:115.50px;height:20.55px;line-height:20.55px;font-size:9.7px;color:#111;-webkit-text-stroke:0.1px #111;transform:scaleX(0.975)">Cost</div>
<div class="t" style="left:551.75px;top:413.60px;width:47.50px;height:20.55px;line-height:20.55px;font-size:9.7px;color:#111;-webkit-text-stroke:0.1px #111;transform:scaleX(0.975)">LTB</div>
<div class="t" style="left:49.50px;top:434.15px;width:51.00px;height:20.55px;line-height:20.55px;font-size:9.7px;color:#111;-webkit-text-stroke:0.1px #111;transform:scaleX(0.975)">12</div>
<div class="t" style="left:100.50px;top:434.15px;width:120.00px;height:20.55px;line-height:20.55px;font-size:9.7px;color:#111;-webkit-text-stroke:0.1px #111;transform:scaleX(0.975)">Safety</div>
<div class="t" style="left:220.50px;top:434.15px;width:215.75px;height:20.55px;line-height:20.55px;font-size:9.7px;color:#111;-webkit-text-stroke:0.1px #111;transform:scaleX(0.975)">Workplace Safety Incidents</div>
<div class="t" style="left:436.25px;top:434.15px;width:115.50px;height:20.55px;line-height:20.55px;font-size:9.7px;color:#111;-webkit-text-stroke:0.1px #111;transform:scaleX(0.975)">Incidents</div>
<div class="t" style="left:551.75px;top:434.15px;width:47.50px;height:20.55px;line-height:20.55px;font-size:9.7px;color:#111;-webkit-text-stroke:0.1px #111;transform:scaleX(0.975)">LTB</div>
<div style="position:absolute;left:603.90px;top:176.00px;width:319.90px;height:409.60px;background:#fff"></div>
<div style="position:absolute;left:603.90px;top:176.00px;width:319.90px;height:29.80px;background:#8fd14f"></div>
<div style="position:absolute;left:603.90px;top:225.85px;width:319.90px;height:1.00px;background:#e0f1da"></div>
<div style="position:absolute;left:603.90px;top:246.40px;width:319.90px;height:1.00px;background:#e0f1da"></div>
<div style="position:absolute;left:603.90px;top:266.95px;width:319.90px;height:1.00px;background:#e0f1da"></div>
<div style="position:absolute;left:603.90px;top:287.50px;width:319.90px;height:1.00px;background:#e0f1da"></div>
<div style="position:absolute;left:603.90px;top:308.05px;width:319.90px;height:1.00px;background:#e0f1da"></div>
<div style="position:absolute;left:603.90px;top:328.60px;width:319.90px;height:1.00px;background:#e0f1da"></div>
<div style="position:absolute;left:603.90px;top:349.15px;width:319.90px;height:1.00px;background:#e0f1da"></div>
<div style="position:absolute;left:603.90px;top:369.70px;width:319.90px;height:1.00px;background:#e0f1da"></div>
<div style="position:absolute;left:603.90px;top:390.25px;width:319.90px;height:1.00px;background:#e0f1da"></div>
<div style="position:absolute;left:603.90px;top:410.80px;width:319.90px;height:1.00px;background:#e0f1da"></div>
<div style="position:absolute;left:603.90px;top:431.35px;width:319.90px;height:1.00px;background:#e0f1da"></div>
<div style="position:absolute;left:603.90px;top:451.90px;width:319.90px;height:1.00px;background:#e0f1da"></div>
<div style="position:absolute;left:603.90px;top:470.93px;width:319.90px;height:1.00px;background:#e0f1da"></div>
<div style="position:absolute;left:603.90px;top:489.96px;width:319.90px;height:1.00px;background:#e0f1da"></div>
<div style="position:absolute;left:603.90px;top:508.99px;width:319.90px;height:1.00px;background:#e0f1da"></div>
<div style="position:absolute;left:603.90px;top:528.02px;width:319.90px;height:1.00px;background:#e0f1da"></div>
<div style="position:absolute;left:603.90px;top:547.05px;width:319.90px;height:1.00px;background:#e0f1da"></div>
<div style="position:absolute;left:603.90px;top:566.08px;width:319.90px;height:1.00px;background:#e0f1da"></div>
<div style="position:absolute;left:603.90px;top:585.11px;width:319.90px;height:1.00px;background:#e0f1da"></div>
<div style="position:absolute;left:675.00px;top:205.80px;width:1.00px;height:379.80px;background:#e0f1da"></div>
<div style="position:absolute;left:675.00px;top:176.00px;width:1.00px;height:29.80px;background:#c9ea9f"></div>
<div style="position:absolute;left:736.50px;top:205.80px;width:1.00px;height:379.80px;background:#e0f1da"></div>
<div style="position:absolute;left:736.50px;top:176.00px;width:1.00px;height:29.80px;background:#c9ea9f"></div>
<div style="position:absolute;left:797.75px;top:205.80px;width:1.00px;height:379.80px;background:#e0f1da"></div>
<div style="position:absolute;left:797.75px;top:176.00px;width:1.00px;height:29.80px;background:#c9ea9f"></div>
<div style="position:absolute;left:861.50px;top:205.80px;width:1.00px;height:379.80px;background:#e0f1da"></div>
<div style="position:absolute;left:861.50px;top:176.00px;width:1.00px;height:29.80px;background:#c9ea9f"></div>
<div class="t" style="left:603.90px;top:178.00px;width:71.60px;height:29.80px;line-height:29.80px;font-size:10.9px;color:#fff;font-weight:bold;-webkit-text-stroke:0.15px #fff">Actual</div>
<div class="t" style="left:675.50px;top:178.00px;width:61.50px;height:29.80px;line-height:29.80px;font-size:10.9px;color:#fff;font-weight:bold;-webkit-text-stroke:0.15px #fff">Target</div>
<div class="t h" style="left:737.00px;top:176px;width:61.25px;height:29.80px;line-height:11.9px;padding-top:4.9px;box-sizing:border-box">Target Vs<br>Actual</div>
<div class="t" style="left:798.25px;top:178.00px;width:63.75px;height:29.80px;line-height:29.80px;font-size:10.9px;color:#fff;font-weight:bold;-webkit-text-stroke:0.15px #fff">PY</div>
<div class="t h" style="left:862.00px;top:176px;width:61.80px;height:29.80px;line-height:11.9px;padding-top:4.9px;box-sizing:border-box">Actual Vs<br>PY</div>
<div style="position:absolute;left:603.90px;top:176.00px;width:319.90px;height:409.60px;border:1.9px solid #62984c;box-sizing:border-box"></div>
<div class="t" style="left:604.25px;top:208.10px;width:71.25px;height:20.55px;line-height:20.55px;font-size:9.7px;color:#111;-webkit-text-stroke:0.1px #111;transform:scaleX(0.975)">99.0</div>
<div class="t" style="left:675.50px;top:208.10px;width:61.50px;height:20.55px;line-height:20.55px;font-size:9.7px;color:#111;-webkit-text-stroke:0.1px #111;transform:scaleX(0.975)">86.1</div>
<div class="t" style="left:763.85px;top:208.10px;width:35.00px;height:20.55px;line-height:20.55px;font-size:9.7px;color:#111;-webkit-text-stroke:0.1px #111;transform:scaleX(0.975)">115%</div>
<div class="t" style="left:798.25px;top:208.10px;width:63.75px;height:20.55px;line-height:20.55px;font-size:9.7px;color:#111;-webkit-text-stroke:0.1px #111;transform:scaleX(0.975)">84.2</div>
<div class="t" style="left:885.75px;top:208.10px;width:37.50px;height:20.55px;line-height:20.55px;font-size:9.7px;color:#111;-webkit-text-stroke:0.1px #111;transform:scaleX(0.975)">118%</div>
<div class="t" style="left:604.25px;top:228.65px;width:71.25px;height:20.55px;line-height:20.55px;font-size:9.7px;color:#111;-webkit-text-stroke:0.1px #111;transform:scaleX(0.975)">72.0</div>
<div class="t" style="left:675.50px;top:228.65px;width:61.50px;height:20.55px;line-height:20.55px;font-size:9.7px;color:#111;-webkit-text-stroke:0.1px #111;transform:scaleX(0.975)">88.6</div>
<div class="t" style="left:763.85px;top:228.65px;width:35.00px;height:20.55px;line-height:20.55px;font-size:9.7px;color:#111;-webkit-text-stroke:0.1px #111;transform:scaleX(0.975)">81%</div>
<div class="t" style="left:798.25px;top:228.65px;width:63.75px;height:20.55px;line-height:20.55px;font-size:9.7px;color:#111;-webkit-text-stroke:0.1px #111;transform:scaleX(0.975)">80.9</div>
<div class="t" style="left:885.75px;top:228.65px;width:37.50px;height:20.55px;line-height:20.55px;font-size:9.7px;color:#111;-webkit-text-stroke:0.1px #111;transform:scaleX(0.975)">89%</div>
<div class="t" style="left:604.25px;top:249.20px;width:71.25px;height:20.55px;line-height:20.55px;font-size:9.7px;color:#111;-webkit-text-stroke:0.1px #111;transform:scaleX(0.975)">83.0</div>
<div class="t" style="left:675.50px;top:249.20px;width:61.50px;height:20.55px;line-height:20.55px;font-size:9.7px;color:#111;-webkit-text-stroke:0.1px #111;transform:scaleX(0.975)">82.2</div>
<div class="t" style="left:763.85px;top:249.20px;width:35.00px;height:20.55px;line-height:20.55px;font-size:9.7px;color:#111;-webkit-text-stroke:0.1px #111;transform:scaleX(0.975)">101%</div>
<div class="t" style="left:798.25px;top:249.20px;width:63.75px;height:20.55px;line-height:20.55px;font-size:9.7px;color:#111;-webkit-text-stroke:0.1px #111;transform:scaleX(0.975)">95.9</div>
<div class="t" style="left:885.75px;top:249.20px;width:37.50px;height:20.55px;line-height:20.55px;font-size:9.7px;color:#111;-webkit-text-stroke:0.1px #111;transform:scaleX(0.975)">87%</div>
<div class="t" style="left:604.25px;top:269.75px;width:71.25px;height:20.55px;line-height:20.55px;font-size:9.7px;color:#111;-webkit-text-stroke:0.1px #111;transform:scaleX(0.975)">59.0</div>
<div class="t" style="left:675.50px;top:269.75px;width:61.50px;height:20.55px;line-height:20.55px;font-size:9.7px;color:#111;-webkit-text-stroke:0.1px #111;transform:scaleX(0.975)">60.2</div>
<div class="t" style="left:763.85px;top:269.75px;width:35.00px;height:20.55px;line-height:20.55px;font-size:9.7px;color:#111;-webkit-text-stroke:0.1px #111;transform:scaleX(0.975)">98%</div>
<div class="t" style="left:798.25px;top:269.75px;width:63.75px;height:20.55px;line-height:20.55px;font-size:9.7px;color:#111;-webkit-text-stroke:0.1px #111;transform:scaleX(0.975)">53.9</div>
<div class="t" style="left:885.75px;top:269.75px;width:37.50px;height:20.55px;line-height:20.55px;font-size:9.7px;color:#111;-webkit-text-stroke:0.1px #111;transform:scaleX(0.975)">110%</div>
<div class="t" style="left:604.25px;top:290.30px;width:71.25px;height:20.55px;line-height:20.55px;font-size:9.7px;color:#111;-webkit-text-stroke:0.1px #111;transform:scaleX(0.975)">87.0</div>
<div class="t" style="left:675.50px;top:290.30px;width:61.50px;height:20.55px;line-height:20.55px;font-size:9.7px;color:#111;-webkit-text-stroke:0.1px #111;transform:scaleX(0.975)">99.2</div>
<div class="t" style="left:763.85px;top:290.30px;width:35.00px;height:20.55px;line-height:20.55px;font-size:9.7px;color:#111;-webkit-text-stroke:0.1px #111;transform:scaleX(0.975)">88%</div>
<div class="t" style="left:798.25px;top:290.30px;width:63.75px;height:20.55px;line-height:20.55px;font-size:9.7px;color:#111;-webkit-text-stroke:0.1px #111;transform:scaleX(0.975)">105.1</div>
<div class="t" style="left:885.75px;top:290.30px;width:37.50px;height:20.55px;line-height:20.55px;font-size:9.7px;color:#111;-webkit-text-stroke:0.1px #111;transform:scaleX(0.975)">83%</div>
<div class="t" style="left:604.25px;top:310.85px;width:71.25px;height:20.55px;line-height:20.55px;font-size:9.7px;color:#111;-webkit-text-stroke:0.1px #111;transform:scaleX(0.975)">84.0</div>
<div class="t" style="left:675.50px;top:310.85px;width:61.50px;height:20.55px;line-height:20.55px;font-size:9.7px;color:#111;-webkit-text-stroke:0.1px #111;transform:scaleX(0.975)">89.0</div>
<div class="t" style="left:763.85px;top:310.85px;width:35.00px;height:20.55px;line-height:20.55px;font-size:9.7px;color:#111;-webkit-text-stroke:0.1px #111;transform:scaleX(0.975)">94%</div>
<div class="t" style="left:798.25px;top:310.85px;width:63.75px;height:20.55px;line-height:20.55px;font-size:9.7px;color:#111;-webkit-text-stroke:0.1px #111;transform:scaleX(0.975)">64.7</div>
<div class="t" style="left:885.75px;top:310.85px;width:37.50px;height:20.55px;line-height:20.55px;font-size:9.7px;color:#111;-webkit-text-stroke:0.1px #111;transform:scaleX(0.975)">130%</div>
<div class="t" style="left:604.25px;top:331.40px;width:71.25px;height:20.55px;line-height:20.55px;font-size:9.7px;color:#111;-webkit-text-stroke:0.1px #111;transform:scaleX(0.975)">85.0</div>
<div class="t" style="left:675.50px;top:331.40px;width:61.50px;height:20.55px;line-height:20.55px;font-size:9.7px;color:#111;-webkit-text-stroke:0.1px #111;transform:scaleX(0.975)">68.9</div>
<div class="t" style="left:763.85px;top:331.40px;width:35.00px;height:20.55px;line-height:20.55px;font-size:9.7px;color:#111;-webkit-text-stroke:0.1px #111;transform:scaleX(0.975)">123%</div>
<div class="t" style="left:798.25px;top:331.40px;width:63.75px;height:20.55px;line-height:20.55px;font-size:9.7px;color:#111;-webkit-text-stroke:0.1px #111;transform:scaleX(0.975)">94.5</div>
<div class="t" style="left:885.75px;top:331.40px;width:37.50px;height:20.55px;line-height:20.55px;font-size:9.7px;color:#111;-webkit-text-stroke:0.1px #111;transform:scaleX(0.975)">90%</div>
<div class="t" style="left:604.25px;top:351.95px;width:71.25px;height:20.55px;line-height:20.55px;font-size:9.7px;color:#111;-webkit-text-stroke:0.1px #111;transform:scaleX(0.975)">66.0</div>
<div class="t" style="left:675.50px;top:351.95px;width:61.50px;height:20.55px;line-height:20.55px;font-size:9.7px;color:#111;-webkit-text-stroke:0.1px #111;transform:scaleX(0.975)">75.9</div>
<div class="t" style="left:763.85px;top:351.95px;width:35.00px;height:20.55px;line-height:20.55px;font-size:9.7px;color:#111;-webkit-text-stroke:0.1px #111;transform:scaleX(0.975)">87%</div>
<div class="t" style="left:798.25px;top:351.95px;width:63.75px;height:20.55px;line-height:20.55px;font-size:9.7px;color:#111;-webkit-text-stroke:0.1px #111;transform:scaleX(0.975)">55.3</div>
<div class="t" style="left:885.75px;top:351.95px;width:37.50px;height:20.55px;line-height:20.55px;font-size:9.7px;color:#111;-webkit-text-stroke:0.1px #111;transform:scaleX(0.975)">119%</div>
<div class="t" style="left:604.25px;top:372.50px;width:71.25px;height:20.55px;line-height:20.55px;font-size:9.7px;color:#111;-webkit-text-stroke:0.1px #111;transform:scaleX(0.975)">68.0</div>
<div class="t" style="left:675.50px;top:372.50px;width:61.50px;height:20.55px;line-height:20.55px;font-size:9.7px;color:#111;-webkit-text-stroke:0.1px #111;transform:scaleX(0.975)">52.4</div>
<div class="t" style="left:763.85px;top:372.50px;width:35.00px;height:20.55px;line-height:20.55px;font-size:9.7px;color:#111;-webkit-text-stroke:0.1px #111;transform:scaleX(0.975)">130%</div>
<div class="t" style="left:798.25px;top:372.50px;width:63.75px;height:20.55px;line-height:20.55px;font-size:9.7px;color:#111;-webkit-text-stroke:0.1px #111;transform:scaleX(0.975)">43.5</div>
<div class="t" style="left:885.75px;top:372.50px;width:37.50px;height:20.55px;line-height:20.55px;font-size:9.7px;color:#111;-webkit-text-stroke:0.1px #111;transform:scaleX(0.975)">156%</div>
<div class="t" style="left:604.25px;top:393.05px;width:71.25px;height:20.55px;line-height:20.55px;font-size:9.7px;color:#111;-webkit-text-stroke:0.1px #111;transform:scaleX(0.975)">95.0</div>
<div class="t" style="left:675.50px;top:393.05px;width:61.50px;height:20.55px;line-height:20.55px;font-size:9.7px;color:#111;-webkit-text-stroke:0.1px #111;transform:scaleX(0.975)">96.0</div>
<div class="t" style="left:763.85px;top:393.05px;width:35.00px;height:20.55px;line-height:20.55px;font-size:9.7px;color:#111;-webkit-text-stroke:0.1px #111;transform:scaleX(0.975)">99%</div>
<div class="t" style="left:798.25px;top:393.05px;width:63.75px;height:20.55px;line-height:20.55px;font-size:9.7px;color:#111;-webkit-text-stroke:0.1px #111;transform:scaleX(0.975)">85.2</div>
<div class="t" style="left:885.75px;top:393.05px;width:37.50px;height:20.55px;line-height:20.55px;font-size:9.7px;color:#111;-webkit-text-stroke:0.1px #111;transform:scaleX(0.975)">112%</div>
<div class="t" style="left:604.25px;top:413.60px;width:71.25px;height:20.55px;line-height:20.55px;font-size:9.7px;color:#111;-webkit-text-stroke:0.1px #111;transform:scaleX(0.975)">56.0</div>
<div class="t" style="left:675.50px;top:413.60px;width:61.50px;height:20.55px;line-height:20.55px;font-size:9.7px;color:#111;-webkit-text-stroke:0.1px #111;transform:scaleX(0.975)">45.9</div>
<div class="t" style="left:763.85px;top:413.60px;width:35.00px;height:20.55px;line-height:20.55px;font-size:9.7px;color:#111;-webkit-text-stroke:0.1px #111;transform:scaleX(0.975)">122%</div>
<div class="t" style="left:798.25px;top:413.60px;width:63.75px;height:20.55px;line-height:20.55px;font-size:9.7px;color:#111;-webkit-text-stroke:0.1px #111;transform:scaleX(0.975)">66.3</div>
<div class="t" style="left:885.75px;top:413.60px;width:37.50px;height:20.55px;line-height:20.55px;font-size:9.7px;color:#111;-webkit-text-stroke:0.1px #111;transform:scaleX(0.975)">85%</div>
<div class="t" style="left:604.25px;top:434.15px;width:71.25px;height:20.55px;line-height:20.55px;font-size:9.7px;color:#111;-webkit-text-stroke:0.1px #111;transform:scaleX(0.975)">90.0</div>
<div class="t" style="left:675.50px;top:434.15px;width:61.50px;height:20.55px;line-height:20.55px;font-size:9.7px;color:#111;-webkit-text-stroke:0.1px #111;transform:scaleX(0.975)">96.3</div>
<div class="t" style="left:763.85px;top:434.15px;width:35.00px;height:20.55px;line-height:20.55px;font-size:9.7px;color:#111;-webkit-text-stroke:0.1px #111;transform:scaleX(0.975)">93%</div>
<div class="t" style="left:798.25px;top:434.15px;width:63.75px;height:20.55px;line-height:20.55px;font-size:9.7px;color:#111;-webkit-text-stroke:0.1px #111;transform:scaleX(0.975)">92.9</div>
<div class="t" style="left:885.75px;top:434.15px;width:37.50px;height:20.55px;line-height:20.55px;font-size:9.7px;color:#111;-webkit-text-stroke:0.1px #111;transform:scaleX(0.975)">97%</div>
<svg style="left:0;top:0" width="1280" height="602"><path d="M746.23 220.63 L750.62 212.13 L755.02 220.63 Z" fill="#4c9f48"/><path d="M869.48 220.63 L873.88 212.13 L878.27 220.63 Z" fill="#e3161b"/><path d="M746.23 232.68 L750.62 241.18 L755.02 232.68 Z" fill="#62a055"/><path d="M869.48 232.68 L873.88 241.18 L878.27 232.68 Z" fill="#62a055"/><path d="M746.23 261.73 L750.62 253.23 L755.02 261.73 Z" fill="#4c9f48"/><path d="M869.48 253.23 L873.88 261.73 L878.27 253.23 Z" fill="#e3161b"/><path d="M746.23 273.78 L750.62 282.28 L755.02 273.78 Z" fill="#62a055"/><path d="M869.48 282.28 L873.88 273.78 L878.27 282.28 Z" fill="#4c9f48"/><path d="M746.23 294.33 L750.62 302.83 L755.02 294.33 Z" fill="#62a055"/><path d="M869.48 294.33 L873.88 302.83 L878.27 294.33 Z" fill="#62a055"/><path d="M746.23 314.88 L750.62 323.38 L755.02 314.88 Z" fill="#e3161b"/><path d="M869.48 323.38 L873.88 314.88 L878.27 323.38 Z" fill="#e3161b"/><path d="M746.23 343.93 L750.62 335.43 L755.02 343.93 Z" fill="#e3161b"/><path d="M869.48 335.43 L873.88 343.93 L878.27 335.43 Z" fill="#62a055"/><path d="M746.23 355.98 L750.62 364.48 L755.02 355.98 Z" fill="#e3161b"/><path d="M869.48 364.48 L873.88 355.98 L878.27 364.48 Z" fill="#e3161b"/><path d="M746.23 385.03 L750.62 376.53 L755.02 385.03 Z" fill="#4c9f48"/><path d="M869.48 385.03 L873.88 376.53 L878.27 385.03 Z" fill="#e3161b"/><path d="M746.23 397.08 L750.62 405.58 L755.02 397.08 Z" fill="#e3161b"/><path d="M869.48 405.58 L873.88 397.08 L878.27 405.58 Z" fill="#e3161b"/><path d="M746.23 426.13 L750.62 417.63 L755.02 426.13 Z" fill="#e3161b"/><path d="M869.48 417.63 L873.88 426.13 L878.27 417.63 Z" fill="#62a055"/><path d="M746.23 438.18 L750.62 446.68 L755.02 438.18 Z" fill="#62a055"/><path d="M869.48 438.18 L873.88 446.68 L878.27 438.18 Z" fill="#62a055"/></svg>
<div style="position:absolute;left:926.40px;top:176.00px;width:323.20px;height:409.60px;background:#fff"></div>
<div style="position:absolute;left:926.40px;top:176.00px;width:323.20px;height:29.80px;background:#a22b94"></div>
<div style="position:absolute;left:926.40px;top:225.85px;width:323.20px;height:1.00px;background:#efdcef"></div>
<div style="position:absolute;left:926.40px;top:246.40px;width:323.20px;height:1.00px;background:#efdcef"></div>
<div style="position:absolute;left:926.40px;top:266.95px;width:323.20px;height:1.00px;background:#efdcef"></div>
<div style="position:absolute;left:926.40px;top:287.50px;width:323.20px;height:1.00px;background:#efdcef"></div>
<div style="position:absolute;left:926.40px;top:308.05px;width:323.20px;height:1.00px;background:#efdcef"></div>
<div style="position:absolute;left:926.40px;top:328.60px;width:323.20px;height:1.00px;background:#efdcef"></div>
<div style="position:absolute;left:926.40px;top:349.15px;width:323.20px;height:1.00px;background:#efdcef"></div>
<div style="position:absolute;left:926.40px;top:369.70px;width:323.20px;height:1.00px;background:#efdcef"></div>
<div style="position:absolute;left:926.40px;top:390.25px;width:323.20px;height:1.00px;background:#efdcef"></div>
<div style="position:absolute;left:926.40px;top:410.80px;width:323.20px;height:1.00px;background:#efdcef"></div>
<div style="position:absolute;left:926.40px;top:431.35px;width:323.20px;height:1.00px;background:#efdcef"></div>
<div style="position:absolute;left:926.40px;top:451.90px;width:323.20px;height:1.00px;background:#efdcef"></div>
<div style="position:absolute;left:926.40px;top:470.93px;width:323.20px;height:1.00px;background:#efdcef"></div>
<div style="position:absolute;left:926.40px;top:489.96px;width:323.20px;height:1.00px;background:#efdcef"></div>
<div style="position:absolute;left:926.40px;top:508.99px;width:323.20px;height:1.00px;background:#efdcef"></div>
<div style="position:absolute;left:926.40px;top:528.02px;width:323.20px;height:1.00px;background:#efdcef"></div>
<div style="position:absolute;left:926.40px;top:547.05px;width:323.20px;height:1.00px;background:#efdcef"></div>
<div style="position:absolute;left:926.40px;top:566.08px;width:323.20px;height:1.00px;background:#efdcef"></div>
<div style="position:absolute;left:926.40px;top:585.11px;width:323.20px;height:1.00px;background:#efdcef"></div>
<div style="position:absolute;left:991.50px;top:205.80px;width:1.00px;height:379.80px;background:#efdcef"></div>
<div style="position:absolute;left:991.50px;top:176.00px;width:1.00px;height:29.80px;background:#e6a9df"></div>
<div style="position:absolute;left:1054.00px;top:205.80px;width:1.00px;height:379.80px;background:#efdcef"></div>
<div style="position:absolute;left:1054.00px;top:176.00px;width:1.00px;height:29.80px;background:#e6a9df"></div>
<div style="position:absolute;left:1125.00px;top:205.80px;width:1.00px;height:379.80px;background:#efdcef"></div>
<div style="position:absolute;left:1125.00px;top:176.00px;width:1.00px;height:29.80px;background:#e6a9df"></div>
<div style="position:absolute;left:1187.00px;top:205.80px;width:1.00px;height:379.80px;background:#efdcef"></div>
<div style="position:absolute;left:1187.00px;top:176.00px;width:1.00px;height:29.80px;background:#e6a9df"></div>
<div class="t" style="left:926.40px;top:178.00px;width:65.60px;height:29.80px;line-height:29.80px;font-size:10.9px;color:#fff;font-weight:bold;-webkit-text-stroke:0.15px #fff">Actual</div>
<div class="t" style="left:992.00px;top:178.00px;width:62.50px;height:29.80px;line-height:29.80px;font-size:10.9px;color:#fff;font-weight:bold;-webkit-text-stroke:0.15px #fff">Target</div>
<div class="t h" style="left:1054.50px;top:176px;width:71.00px;height:29.80px;line-height:11.9px;padding-top:4.9px;box-sizing:border-box">Actual Vs<br>Target</div>
<div class="t" style="left:1125.50px;top:178.00px;width:62.00px;height:29.80px;line-height:29.80px;font-size:10.9px;color:#fff;font-weight:bold;-webkit-text-stroke:0.15px #fff">PY</div>
<div class="t h" style="left:1187.50px;top:176px;width:62.10px;height:29.80px;line-height:11.9px;padding-top:4.9px;box-sizing:border-box">Actual Vs<br>PY</div>
<div style="position:absolute;left:926.40px;top:176.00px;width:323.20px;height:409.60px;border:1.7px solid #5e1f55;box-sizing:border-box"></div>
<div class="t" style="left:927.50px;top:208.10px;width:64.50px;height:20.55px;line-height:20.55px;font-size:9.7px;color:#111;-webkit-text-stroke:0.1px #111;transform:scaleX(0.975)">100.0</div>
<div class="t" style="left:992.00px;top:208.10px;width:62.50px;height:20.55px;line-height:20.55px;font-size:9.7px;color:#111;-webkit-text-stroke:0.1px #111;transform:scaleX(0.975)">109.0</div>
<div class="t" style="left:1080.00px;top:208.10px;width:45.50px;height:20.55px;line-height:20.55px;font-size:9.7px;color:#111;-webkit-text-stroke:0.1px #111;transform:scaleX(0.975)">92%</div>
<div class="t" style="left:1125.50px;top:208.10px;width:62.00px;height:20.55px;line-height:20.55px;font-size:9.7px;color:#111;-webkit-text-stroke:0.1px #111;transform:scaleX(0.975)">72.2</div>
<div class="t" style="left:1214.50px;top:208.10px;width:35.00px;height:20.55px;line-height:20.55px;font-size:9.7px;color:#111;-webkit-text-stroke:0.1px #111;transform:scaleX(0.975)">138%</div>
<div class="t" style="left:927.50px;top:228.65px;width:64.50px;height:20.55px;line-height:20.55px;font-size:9.7px;color:#111;-webkit-text-stroke:0.1px #111;transform:scaleX(0.975)">106.0</div>
<div class="t" style="left:992.00px;top:228.65px;width:62.50px;height:20.55px;line-height:20.55px;font-size:9.7px;color:#111;-webkit-text-stroke:0.1px #111;transform:scaleX(0.975)">89.0</div>
<div class="t" style="left:1080.00px;top:228.65px;width:45.50px;height:20.55px;line-height:20.55px;font-size:9.7px;color:#111;-webkit-text-stroke:0.1px #111;transform:scaleX(0.975)">119%</div>
<div class="t" style="left:1125.50px;top:228.65px;width:62.00px;height:20.55px;line-height:20.55px;font-size:9.7px;color:#111;-webkit-text-stroke:0.1px #111;transform:scaleX(0.975)">82.4</div>
<div class="t" style="left:1214.50px;top:228.65px;width:35.00px;height:20.55px;line-height:20.55px;font-size:9.7px;color:#111;-webkit-text-stroke:0.1px #111;transform:scaleX(0.975)">129%</div>
<div class="t" style="left:927.50px;top:249.20px;width:64.50px;height:20.55px;line-height:20.55px;font-size:9.7px;color:#111;-webkit-text-stroke:0.1px #111;transform:scaleX(0.975)">84.0</div>
<div class="t" style="left:992.00px;top:249.20px;width:62.50px;height:20.55px;line-height:20.55px;font-size:9.7px;color:#111;-webkit-text-stroke:0.1px #111;transform:scaleX(0.975)">58.8</div>
<div class="t" style="left:1080.00px;top:249.20px;width:45.50px;height:20.55px;line-height:20.55px;font-size:9.7px;color:#111;-webkit-text-stroke:0.1px #111;transform:scaleX(0.975)">143%</div>
<div class="t" style="left:1125.50px;top:249.20px;width:62.00px;height:20.55px;line-height:20.55px;font-size:9.7px;color:#111;-webkit-text-stroke:0.1px #111;transform:scaleX(0.975)">62.9</div>
<div class="t" style="left:1214.50px;top:249.20px;width:35.00px;height:20.55px;line-height:20.55px;font-size:9.7px;color:#111;-webkit-text-stroke:0.1px #111;transform:scaleX(0.975)">134%</div>
<div class="t" style="left:927.50px;top:269.75px;width:64.50px;height:20.55px;line-height:20.55px;font-size:9.7px;color:#111;-webkit-text-stroke:0.1px #111;transform:scaleX(0.975)">77.0</div>
<div class="t" style="left:992.00px;top:269.75px;width:62.50px;height:20.55px;line-height:20.55px;font-size:9.7px;color:#111;-webkit-text-stroke:0.1px #111;transform:scaleX(0.975)">55.4</div>
<div class="t" style="left:1080.00px;top:269.75px;width:45.50px;height:20.55px;line-height:20.55px;font-size:9.7px;color:#111;-webkit-text-stroke:0.1px #111;transform:scaleX(0.975)">139%</div>
<div class="t" style="left:1125.50px;top:269.75px;width:62.00px;height:20.55px;line-height:20.55px;font-size:9.7px;color:#111;-webkit-text-stroke:0.1px #111;transform:scaleX(0.975)">74.8</div>
<div class="t" style="left:1214.50px;top:269.75px;width:35.00px;height:20.55px;line-height:20.55px;font-size:9.7px;color:#111;-webkit-text-stroke:0.1px #111;transform:scaleX(0.975)">103%</div>
<div class="t" style="left:927.50px;top:290.30px;width:64.50px;height:20.55px;line-height:20.55px;font-size:9.7px;color:#111;-webkit-text-stroke:0.1px #111;transform:scaleX(0.975)">67.0</div>
<div class="t" style="left:992.00px;top:290.30px;width:62.50px;height:20.55px;line-height:20.55px;font-size:9.7px;color:#111;-webkit-text-stroke:0.1px #111;transform:scaleX(0.975)">69.0</div>
<div class="t" style="left:1080.00px;top:290.30px;width:45.50px;height:20.55px;line-height:20.55px;font-size:9.7px;color:#111;-webkit-text-stroke:0.1px #111;transform:scaleX(0.975)">97%</div>
<div class="t" style="left:1125.50px;top:290.30px;width:62.00px;height:20.55px;line-height:20.55px;font-size:9.7px;color:#111;-webkit-text-stroke:0.1px #111;transform:scaleX(0.975)">90.9</div>
<div class="t" style="left:1214.50px;top:290.30px;width:35.00px;height:20.55px;line-height:20.55px;font-size:9.7px;color:#111;-webkit-text-stroke:0.1px #111;transform:scaleX(0.975)">74%</div>
<div class="t" style="left:927.50px;top:310.85px;width:64.50px;height:20.55px;line-height:20.55px;font-size:9.7px;color:#111;-webkit-text-stroke:0.1px #111;transform:scaleX(0.975)">94.0</div>
<div class="t" style="left:992.00px;top:310.85px;width:62.50px;height:20.55px;line-height:20.55px;font-size:9.7px;color:#111;-webkit-text-stroke:0.1px #111;transform:scaleX(0.975)">92.1</div>
<div class="t" style="left:1080.00px;top:310.85px;width:45.50px;height:20.55px;line-height:20.55px;font-size:9.7px;color:#111;-webkit-text-stroke:0.1px #111;transform:scaleX(0.975)">102%</div>
<div class="t" style="left:1125.50px;top:310.85px;width:62.00px;height:20.55px;line-height:20.55px;font-size:9.7px;color:#111;-webkit-text-stroke:0.1px #111;transform:scaleX(0.975)">76.1</div>
<div class="t" style="left:1214.50px;top:310.85px;width:35.00px;height:20.55px;line-height:20.55px;font-size:9.7px;color:#111;-webkit-text-stroke:0.1px #111;transform:scaleX(0.975)">123%</div>
<div class="t" style="left:927.50px;top:331.40px;width:64.50px;height:20.55px;line-height:20.55px;font-size:9.7px;color:#111;-webkit-text-stroke:0.1px #111;transform:scaleX(0.975)">92.0</div>
<div class="t" style="left:992.00px;top:331.40px;width:62.50px;height:20.55px;line-height:20.55px;font-size:9.7px;color:#111;-webkit-text-stroke:0.1px #111;transform:scaleX(0.975)">66.2</div>
<div class="t" style="left:1080.00px;top:331.40px;width:45.50px;height:20.55px;line-height:20.55px;font-size:9.7px;color:#111;-webkit-text-stroke:0.1px #111;transform:scaleX(0.975)">139%</div>
<div class="t" style="left:1125.50px;top:331.40px;width:62.00px;height:20.55px;line-height:20.55px;font-size:9.7px;color:#111;-webkit-text-stroke:0.1px #111;transform:scaleX(0.975)">91.9</div>
<div class="t" style="left:1214.50px;top:331.40px;width:35.00px;height:20.55px;line-height:20.55px;font-size:9.7px;color:#111;-webkit-text-stroke:0.1px #111;transform:scaleX(0.975)">100%</div>
<div class="t" style="left:927.50px;top:351.95px;width:64.50px;height:20.55px;line-height:20.55px;font-size:9.7px;color:#111;-webkit-text-stroke:0.1px #111;transform:scaleX(0.975)">60.0</div>
<div class="t" style="left:992.00px;top:351.95px;width:62.50px;height:20.55px;line-height:20.55px;font-size:9.7px;color:#111;-webkit-text-stroke:0.1px #111;transform:scaleX(0.975)">51.6</div>
<div class="t" style="left:1080.00px;top:351.95px;width:45.50px;height:20.55px;line-height:20.55px;font-size:9.7px;color:#111;-webkit-text-stroke:0.1px #111;transform:scaleX(0.975)">116%</div>
<div class="t" style="left:1125.50px;top:351.95px;width:62.00px;height:20.55px;line-height:20.55px;font-size:9.7px;color:#111;-webkit-text-stroke:0.1px #111;transform:scaleX(0.975)">47.0</div>
<div class="t" style="left:1214.50px;top:351.95px;width:35.00px;height:20.55px;line-height:20.55px;font-size:9.7px;color:#111;-webkit-text-stroke:0.1px #111;transform:scaleX(0.975)">128%</div>
<div class="t" style="left:927.50px;top:372.50px;width:64.50px;height:20.55px;line-height:20.55px;font-size:9.7px;color:#111;-webkit-text-stroke:0.1px #111;transform:scaleX(0.975)">72.0</div>
<div class="t" style="left:992.00px;top:372.50px;width:62.50px;height:20.55px;line-height:20.55px;font-size:9.7px;color:#111;-webkit-text-stroke:0.1px #111;transform:scaleX(0.975)">65.5</div>
<div class="t" style="left:1080.00px;top:372.50px;width:45.50px;height:20.55px;line-height:20.55px;font-size:9.7px;color:#111;-webkit-text-stroke:0.1px #111;transform:scaleX(0.975)">110%</div>
<div class="t" style="left:1125.50px;top:372.50px;width:62.00px;height:20.55px;line-height:20.55px;font-size:9.7px;color:#111;-webkit-text-stroke:0.1px #111;transform:scaleX(0.975)">90.3</div>
<div class="t" style="left:1214.50px;top:372.50px;width:35.00px;height:20.55px;line-height:20.55px;font-size:9.7px;color:#111;-webkit-text-stroke:0.1px #111;transform:scaleX(0.975)">80%</div>
<div class="t" style="left:927.50px;top:393.05px;width:64.50px;height:20.55px;line-height:20.55px;font-size:9.7px;color:#111;-webkit-text-stroke:0.1px #111;transform:scaleX(0.975)">114.0</div>
<div class="t" style="left:992.00px;top:393.05px;width:62.50px;height:20.55px;line-height:20.55px;font-size:9.7px;color:#111;-webkit-text-stroke:0.1px #111;transform:scaleX(0.975)">103.7</div>
<div class="t" style="left:1080.00px;top:393.05px;width:45.50px;height:20.55px;line-height:20.55px;font-size:9.7px;color:#111;-webkit-text-stroke:0.1px #111;transform:scaleX(0.975)">110%</div>
<div class="t" style="left:1125.50px;top:393.05px;width:62.00px;height:20.55px;line-height:20.55px;font-size:9.7px;color:#111;-webkit-text-stroke:0.1px #111;transform:scaleX(0.975)">78.4</div>
<div class="t" style="left:1214.50px;top:393.05px;width:35.00px;height:20.55px;line-height:20.55px;font-size:9.7px;color:#111;-webkit-text-stroke:0.1px #111;transform:scaleX(0.975)">146%</div>
<div class="t" style="left:927.50px;top:413.60px;width:64.50px;height:20.55px;line-height:20.55px;font-size:9.7px;color:#111;-webkit-text-stroke:0.1px #111;transform:scaleX(0.975)">81.0</div>
<div class="t" style="left:992.00px;top:413.60px;width:62.50px;height:20.55px;line-height:20.55px;font-size:9.7px;color:#111;-webkit-text-stroke:0.1px #111;transform:scaleX(0.975)">91.5</div>
<div class="t" style="left:1080.00px;top:413.60px;width:45.50px;height:20.55px;line-height:20.55px;font-size:9.7px;color:#111;-webkit-text-stroke:0.1px #111;transform:scaleX(0.975)">88%</div>
<div class="t" style="left:1125.50px;top:413.60px;width:62.00px;height:20.55px;line-height:20.55px;font-size:9.7px;color:#111;-webkit-text-stroke:0.1px #111;transform:scaleX(0.975)">90.7</div>
<div class="t" style="left:1214.50px;top:413.60px;width:35.00px;height:20.55px;line-height:20.55px;font-size:9.7px;color:#111;-webkit-text-stroke:0.1px #111;transform:scaleX(0.975)">89%</div>
<div class="t" style="left:927.50px;top:434.15px;width:64.50px;height:20.55px;line-height:20.55px;font-size:9.7px;color:#111;-webkit-text-stroke:0.1px #111;transform:scaleX(0.975)">94.0</div>
<div class="t" style="left:992.00px;top:434.15px;width:62.50px;height:20.55px;line-height:20.55px;font-size:9.7px;color:#111;-webkit-text-stroke:0.1px #111;transform:scaleX(0.975)">110.9</div>
<div class="t" style="left:1080.00px;top:434.15px;width:45.50px;height:20.55px;line-height:20.55px;font-size:9.7px;color:#111;-webkit-text-stroke:0.1px #111;transform:scaleX(0.975)">85%</div>
<div class="t" style="left:1125.50px;top:434.15px;width:62.00px;height:20.55px;line-height:20.55px;font-size:9.7px;color:#111;-webkit-text-stroke:0.1px #111;transform:scaleX(0.975)">109.3</div>
<div class="t" style="left:1214.50px;top:434.15px;width:35.00px;height:20.55px;line-height:20.55px;font-size:9.7px;color:#111;-webkit-text-stroke:0.1px #111;transform:scaleX(0.975)">86%</div>
<svg style="left:0;top:0" width="1280" height="602"><path d="M1062.85 220.63 L1067.25 212.13 L1071.65 220.63 Z" fill="#e3161b"/><path d="M1196.60 220.63 L1201.00 212.13 L1205.40 220.63 Z" fill="#e3161b"/><path d="M1062.85 232.68 L1067.25 241.18 L1071.65 232.68 Z" fill="#e3161b"/><path d="M1196.60 232.68 L1201.00 241.18 L1205.40 232.68 Z" fill="#62a055"/><path d="M1062.85 261.73 L1067.25 253.23 L1071.65 261.73 Z" fill="#4c9f48"/><path d="M1196.60 253.23 L1201.00 261.73 L1205.40 253.23 Z" fill="#e3161b"/><path d="M1062.85 273.78 L1067.25 282.28 L1071.65 273.78 Z" fill="#e3161b"/><path d="M1196.60 282.28 L1201.00 273.78 L1205.40 282.28 Z" fill="#4c9f48"/><path d="M1062.85 294.33 L1067.25 302.83 L1071.65 294.33 Z" fill="#62a055"/><path d="M1196.60 294.33 L1201.00 302.83 L1205.40 294.33 Z" fill="#62a055"/><path d="M1062.85 314.88 L1067.25 323.38 L1071.65 314.88 Z" fill="#62a055"/><path d="M1196.60 323.38 L1201.00 314.88 L1205.40 323.38 Z" fill="#e3161b"/><path d="M1062.85 343.93 L1067.25 335.43 L1071.65 343.93 Z" fill="#e3161b"/><path d="M1196.60 335.43 L1201.00 343.93 L1205.40 335.43 Z" fill="#62a055"/><path d="M1062.85 355.98 L1067.25 364.48 L1071.65 355.98 Z" fill="#62a055"/><path d="M1196.60 364.48 L1201.00 355.98 L1205.40 364.48 Z" fill="#e3161b"/><path d="M1062.85 385.03 L1067.25 376.53 L1071.65 385.03 Z" fill="#4c9f48"/><path d="M1196.60 385.03 L1201.00 376.53 L1205.40 385.03 Z" fill="#e3161b"/><path d="M1062.85 397.08 L1067.25 405.58 L1071.65 397.08 Z" fill="#62a055"/><path d="M1196.60 405.58 L1201.00 397.08 L1205.40 405.58 Z" fill="#e3161b"/><path d="M1062.85 426.13 L1067.25 417.63 L1071.65 426.13 Z" fill="#4c9f48"/><path d="M1196.60 417.63 L1201.00 426.13 L1205.40 417.63 Z" fill="#62a055"/><path d="M1062.85 438.18 L1067.25 446.68 L1071.65 438.18 Z" fill="#62a055"/><path d="M1196.60 438.18 L1201.00 446.68 L1205.40 438.18 Z" fill="#62a055"/></svg>
</body></html>
